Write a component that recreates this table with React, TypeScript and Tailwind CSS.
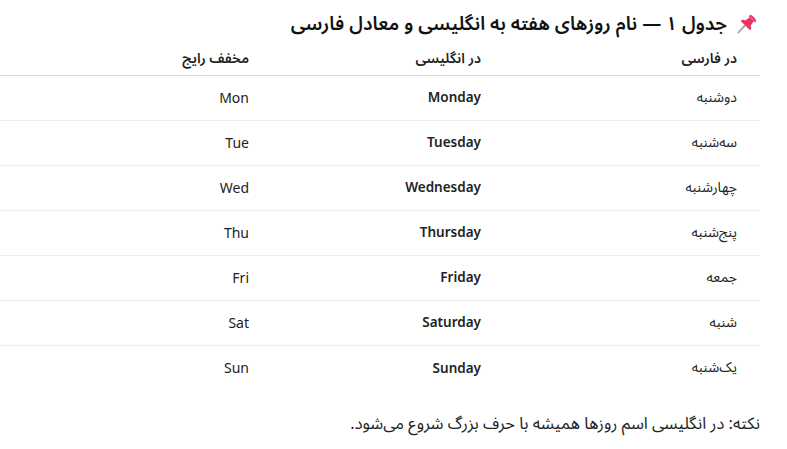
import React from "react";

const rows: [string, string, string][] = [
  ["دوشنبه", "Monday", "Mon"],
  ["سه‌شنبه", "Tuesday", "Tue"],
  ["چهارشنبه", "Wednesday", "Wed"],
  ["پنج‌شنبه", "Thursday", "Thu"],
  ["جمعه", "Friday", "Fri"],
  ["شنبه", "Saturday", "Sat"],
  ["یک‌شنبه", "Sunday", "Sun"],
];

const fa = { fontFamily: '"Noto Sans Arabic", "Noto Sans", sans-serif' };
const en = { fontFamily: '"Noto Sans", "Open Sans", sans-serif' };

function Pin() {
  return (
    <svg width="21" height="21" viewBox="0 0 36 36" className="shrink-0">
      <path d="M4 32 L15 20" stroke="#9aa5ae" strokeWidth="3" strokeLinecap="round" />
      <path
        d="M22 3 C24 1 26 1 28 3 L33 8 C35 10 35 12 33 14 L30 13 L25 20 C27 23 26 26 24 28 L8 12 C10 10 13 9 16 11 L23 6 Z"
        fill="#e8355e"
      />
      <path d="M24 5 L31 12" stroke="#f26d8c" strokeWidth="2" strokeLinecap="round" />
    </svg>
  );
}

export default function App() {
  return (
    <div dir="rtl" className="w-[787px] h-[449px] bg-white text-[#222] overflow-hidden" style={fa}>
      <div className="w-[760px] mr-[27px] ml-0">
        <h1 className="h-[45px] flex items-center gap-[9px] pt-[4px] text-[19px] font-semibold text-[#111] pr-[3px]">
          <Pin />
          <span>جدول ۱ — نام روزهای هفته به انگلیسی و معادل فارسی</span>
        </h1>
        <table className="w-full border-collapse text-[14px]">
          <thead>
            <tr className="h-[30px] border-b border-[#d9d9d9]">
              <th className="w-[256px] text-right font-semibold pr-[23px] pb-[2px] text-[14px]">در فارسی</th>
              <th className="w-[232px] text-right font-semibold pr-[23px] pb-[2px] text-[14px]">در انگلیسی</th>
              <th className="text-right font-semibold pr-[23px] pb-[2px] text-[14px]">مخفف رایج</th>
            </tr>
          </thead>
          <tbody>
            {rows.map((r, i) => (
              <tr
                key={r[1]}
                className={"h-[45px] " + (i < rows.length - 1 ? "border-b border-[#eeeeee]" : "")}
              >
                <td className="text-right pr-[23px]">{r[0]}</td>
                <td className="text-right pr-[23px] font-semibold text-[13.5px]" style={en}>
                  <span dir="ltr">{r[1]}</span>
                </td>
                <td className="text-right pr-[23px] text-[14px]" style={en}>
                  <span dir="ltr">{r[2]}</span>
                </td>
              </tr>
            ))}
          </tbody>
        </table>
        <p className="mt-[22px] text-[16.5px] text-[#222]">
          نکته: در انگلیسی اسم روزها همیشه با حرف بزرگ شروع می‌شود.
        </p>
      </div>
    </div>
  );
}
